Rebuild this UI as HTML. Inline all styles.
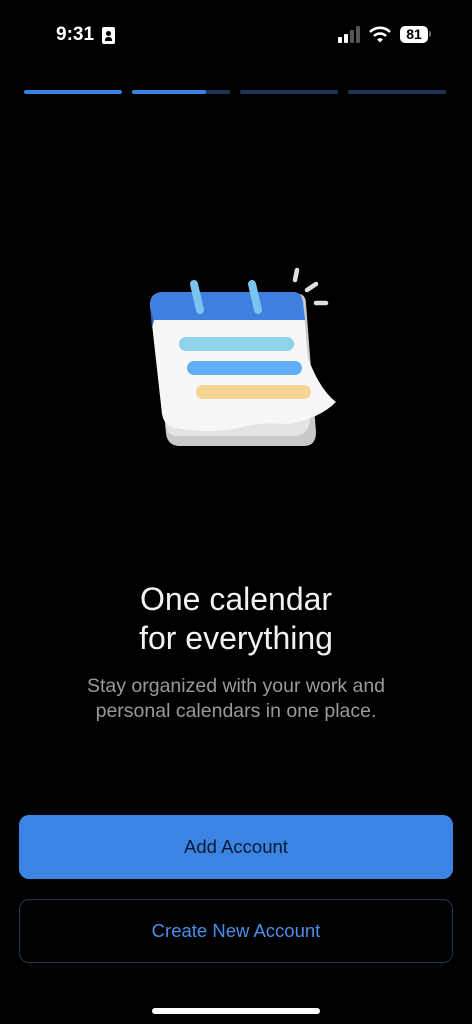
<!DOCTYPE html>
<html><head><meta charset="utf-8"><style>
*{margin:0;padding:0;box-sizing:border-box}
body{width:472px;height:1024px;background:#000;position:relative;overflow:hidden;font-family:"Liberation Sans",sans-serif;color:#fff}
.abs{position:absolute}
.bar{position:absolute;top:90px;height:4px;border-radius:2px;background:#1d3357}
h1{position:absolute;top:580px;width:100%;text-align:center;font-size:32px;font-weight:400;line-height:39px;color:#f2f2f2}
p.sub{position:absolute;top:674px;width:100%;text-align:center;font-size:19.5px;line-height:25px;color:#9a9a9a}
.btn{position:absolute;left:19px;width:434px;height:64px;border-radius:10px;display:flex;align-items:center;justify-content:center;font-size:18.5px}
</style></head><body>
<div class="abs" style="left:56px;top:24px;font-size:19px;font-weight:700">9:31</div>
<div class="abs" style="left:102px;top:27px;width:13px;height:17px;background:#fff;border-radius:2px"><div style="position:absolute;left:4px;top:4px;width:5px;height:5px;border-radius:50%;background:#000"></div><div style="position:absolute;left:3px;top:10px;width:7px;height:4px;border-radius:3px 3px 0 0;background:#000"></div></div>
<svg class="abs" style="left:338px;top:26px" width="24" height="18"><rect x="0" y="11" width="4" height="6" rx="1" fill="#fff"/><rect x="6" y="8" width="4" height="9" rx="1" fill="#fff"/><rect x="12" y="4" width="4" height="13" rx="1" fill="#555"/><rect x="18" y="0" width="4" height="17" rx="1" fill="#555"/></svg>
<svg class="abs" style="left:369px;top:26px" width="22" height="17" viewBox="0 0 22 17"><path d="M1 6 A14 14 0 0 1 21 6" stroke="#fff" stroke-width="2.6" fill="none"/><path d="M5 10 A8.5 8.5 0 0 1 17 10" stroke="#fff" stroke-width="2.6" fill="none"/><path d="M8 13.5 L11 16.5 L14 13.5 A4 4 0 0 0 8 13.5Z" fill="#fff"/></svg>
<div class="abs" style="left:400px;top:26px;width:28px;height:17px;border-radius:5px;background:#fff;color:#000;font-size:14px;font-weight:700;text-align:center;line-height:17px">81</div>
<div class="abs" style="left:429px;top:31px;width:2px;height:6px;background:#666;border-radius:0 2px 2px 0"></div>
<div class="bar" style="left:24px;width:98px;background:#3b82e0"></div>
<div class="bar" style="left:132px;width:98px"></div>
<div class="bar" style="left:132px;width:74px;background:#3b82e0"></div>
<div class="bar" style="left:240px;width:98px"></div>
<div class="bar" style="left:348px;width:98px"></div>
<svg class="abs" style="left:140px;top:260px" width="210" height="200" viewBox="0 0 210 200">
<path d="M14 46 Q12 36 22 34 L158 34 Q166 34 166 44 L176 172 Q176 186 164 186 L40 186 Q28 186 26 174 Z" fill="#c9c9c9"/>
<path d="M20 40 L160 40 L170 158 Q170 176 152 176 L38 176 Q26 176 26 164 Z" fill="#e4e4e4"/>
<path d="M10 45 Q10 33 22 32 L152 32 Q162 32 163 42 L168 98 Q180 130 196 142 Q180 158 150 164 Q118 162 98 168 Q70 174 36 168 Q24 166 22 154 L12 64 Z" fill="#f7f7f7"/>
<path d="M10 45 Q10 33 22 32 L152 32 Q162 32 163 42 L165 60 L14 60 Z" fill="#3f7fe0"/>
<path d="M10 45 L14 60 L12 68 Z" fill="#2f63b5"/>
<path d="M54 24 L60 50" stroke="#7cc4ee" stroke-width="8" stroke-linecap="round"/>
<path d="M112 24 L118 50" stroke="#7cc4ee" stroke-width="8" stroke-linecap="round"/>
<rect x="39" y="77" width="115" height="14" rx="7" fill="#8dd3ec"/>
<rect x="47" y="101" width="115" height="14" rx="7" fill="#62aef5"/>
<rect x="56" y="125" width="115" height="14" rx="7" fill="#f7d595"/>
<path d="M157 10 L155 20 M167 30 L176 24 M176 43 L186 43" stroke="#e0e0e0" stroke-width="4.5" stroke-linecap="round"/>
</svg>
<h1>One calendar<br>for everything</h1>
<p class="sub">Stay organized with your work and<br>personal calendars in one place.</p>
<div class="btn" style="top:815px;background:#3b84e3;color:#0a1a33">Add Account</div>
<div class="btn" style="top:899px;border:1.5px solid #1f3658;color:#4b8fe8">Create New Account</div>
<div class="abs" style="left:152px;top:1008px;width:168px;height:6px;border-radius:3px;background:#fff"></div>
</body></html>
